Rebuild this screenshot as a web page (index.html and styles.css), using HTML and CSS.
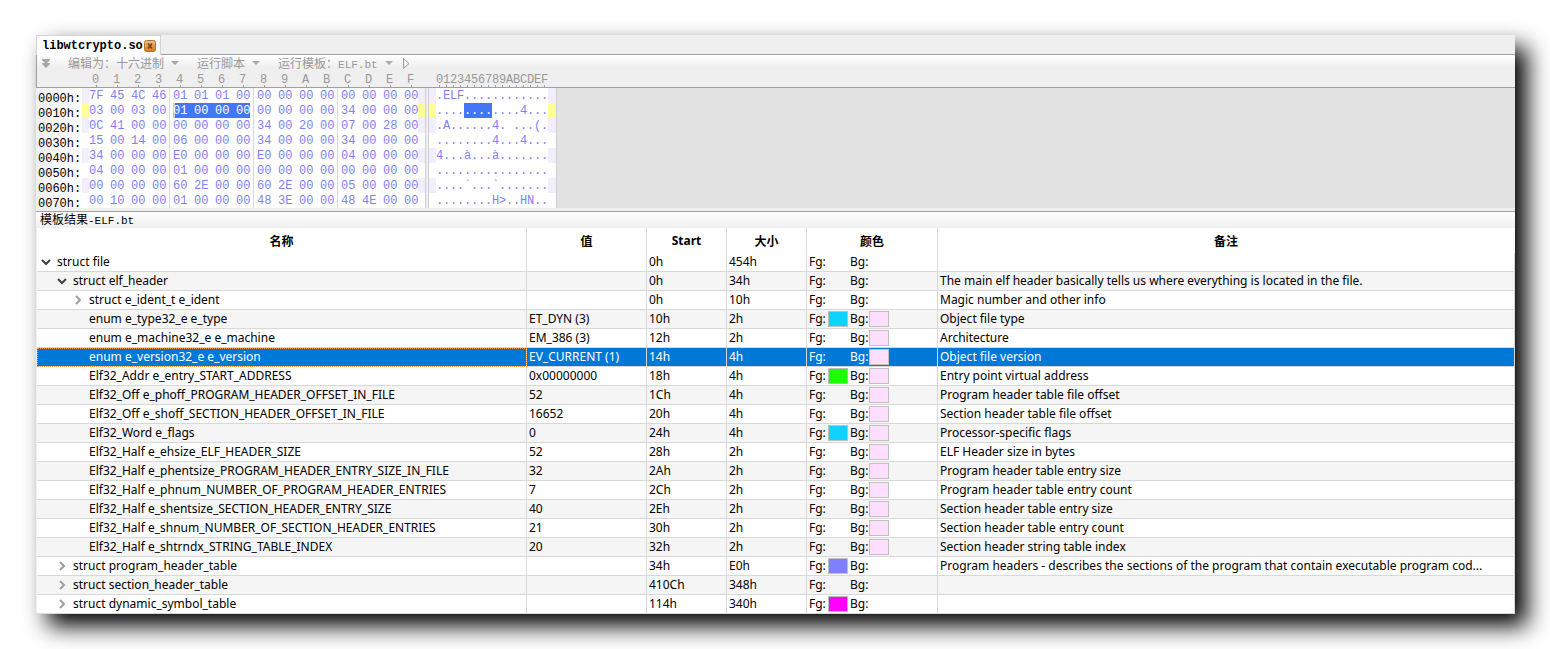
FILE: index.html
```html
<!DOCTYPE html>
<html lang="zh-CN">
  <head>
    <meta charset="UTF-8" />
    <meta name="viewport" content="width=device-width, initial-scale=1.0" />
    <title>libwtcrypto.so</title>
    <link rel="stylesheet" href="styles.css">
  </head>
  <body>
    <main class="window">
      <div class="tabs">
        <div class="tab">
          <span>libwtcrypto.so</span>
          <button class="close" aria-label="Close">
            <svg width="12" height="12" viewBox="0 0 12 12">
              <defs>
                <linearGradient id="orange" x1="0" y1="0" x2="0" y2="1">
                  <stop offset="0" stop-color="#f0bf85" />
                  <stop offset="1" stop-color="#dd7d14" />
                </linearGradient>
              </defs>
              <rect x="0.5" y="0.5" width="11" height="11" rx="2" fill="url(#orange)" stroke="#b8702a" />
              <path d="M4 3.500l4 5M8 3.500l-4 5" stroke="#7a4a1c" stroke-width="2" />
            </svg>
          </button>
        </div>
      </div>

      <div class="toolbar">
        <button class="more" aria-label="More">
          <svg width="8" height="9" viewBox="0 0 8 9" fill="#a8a8a8">
            <path d="M0 0h8v1L5 4h3v1L4 9 0 5V4h3L0 1z" />
          </svg>
        </button>
        <button class="menu"><span>编辑为：十六进制</span><i class="arrow"></i></button>
        <button class="menu"><span>运行脚本</span><i class="arrow"></i></button>
        <button class="menu"><span>运行模板：<span class="latin">ELF.bt</span></span><i class="arrow"></i></button>
        <button class="run" aria-label="Run">
          <svg width="7" height="11" viewBox="0 0 7 11">
            <path d="M0.5 0.5v10l5.5-5z" fill="none" stroke="#999" />
          </svg>
        </button>
      </div>

      <table class="hex">
        <colgroup></colgroup>
        <thead></thead>
        <tbody></tbody>
      </table>

      <h2 class="panel-title">模板结果<span class="latin">-ELF.bt</span></h2>

      <table class="results">
        <colgroup>
          <col class="c-name" />
          <col class="c-value" />
          <col class="c-num" />
          <col class="c-num" />
          <col class="c-color" />
          <col />
        </colgroup>
        <thead>
          <tr>
            <th>名称</th>
            <th>值</th>
            <th>Start</th>
            <th>大小</th>
            <th>颜色</th>
            <th>备注</th>
          </tr>
        </thead>
        <tbody></tbody>
      </table>
    </main>
    <script src="script.js"></script>
  </body>
</html>
```

FILE: styles.css
```css
body {
  margin: 0;
  padding: 35px 35px 35px 36px;
  background: #fff;
  color: #000;
  font-family: "Noto Sans", "Noto Sans CJK SC", sans-serif;
  font-size: 12px;
}
button {
  display: flex;
  align-items: center;
  padding: 0;
  border: 0;
  background: none;
  color: inherit;
  font: inherit;
}
table {
  width: 100%;
  table-layout: fixed;
  border-spacing: 0;
}
th,
td {
  padding: 0;
  text-align: left;
  white-space: nowrap;
}
.window {
  background: #efefef;
  box-shadow: 12px 12px 22px #000;
}

/* tabs */
.tabs {
  display: flex;
  height: 20px;
  box-shadow: inset 0 -1px #a0a0a0;
}
.tab {
  display: flex;
  align-items: center;
  gap: 1px;
  box-sizing: border-box;
  width: 125px;
  padding-left: 5px;
  border: 1px solid #d4d4d4;
  border-bottom: 0;
  background: #fff;
  font: bold 12px "Liberation Mono", monospace;
}

/* toolbar */
.toolbar {
  display: flex;
  align-items: center;
  height: 16px;
  padding-left: 5px;
  border-left: 1px solid #a0a0a0;
  background: linear-gradient(#fff, #efefef 12px);
  color: #999;
  font-family: "Noto Sans CJK SC", sans-serif;
  line-height: 14px;
}
.more,
.menu {
  margin-right: 18px;
}
.arrow {
  margin-left: 7px;
  border: 4px solid transparent;
  border-top-color: #aaa;
  border-bottom: 0;
}
.menu + .run {
  margin-left: -8px;
}
.latin {
  font-family: "Liberation Mono", monospace;
  font-size: 11px;
  line-height: 0;
}

/* hex dump */
.hex {
  font: 12px "Liberation Mono", monospace;
  line-height: 14px;
}
.c-addr {
  width: 46px;
}
.c-side,
.c-char {
  width: 7px;
}
.c-byte {
  width: 21px;
}
.c-last {
  width: 14px;
}
.c-gutter {
  width: 4px;
}
.c-edge {
  width: 8px;
}
.hex thead th {
  height: 14px;
  padding-top: 2px;
  border-bottom: 1px solid #a0a0a0;
  background: #efefef;
  color: #999;
  font-weight: normal;
}
.hex thead th:first-child {
  box-shadow: inset 1px 0 #a0a0a0;
}
.hex thead .tick {
  padding-left: 3px;
  background: linear-gradient(#a0a0a0, #a0a0a0) 7px 100% / 1px 2px no-repeat #efefef;
}
.hex thead .char {
  background: linear-gradient(#a0a0a0, #a0a0a0) 3px 100% / 1px 2px no-repeat #efefef;
}
.hex tbody td {
  height: 14px;
  padding-top: 1px;
  background-color: #fff;
  color: #7f7ff5;
}
.hex tbody th {
  background: linear-gradient(90deg, #efefef, #fff);
  font-weight: normal;
}
/* addresses sit slightly below their bytes */
.addr {
  display: block;
  height: 15px;
  padding-left: 2px;
  line-height: 22px;
}
.hex tbody .group {
  background: linear-gradient(#d8d8d8, #d8d8d8) 17px 0 / 1px 100% no-repeat #fff;
}
.hex tbody .sel {
  background-color: #4477f7;
  color: #fff;
}
.hex tbody .sel.group {
  background:
    linear-gradient(#4477f7, #4477f7) 0 0 / 14px 100% no-repeat,
    linear-gradient(#d8d8d8, #d8d8d8) 17px 0 / 1px 100% no-repeat #fff;
}
.hex tbody .cursor {
  box-shadow: inset 2px 0 #c8c8c8;
}
.hex tbody tr:nth-child(odd) .side {
  background: #f0eeff;
}
.hex tbody .current .side {
  background: #ffff99;
}
.hex tbody .gutter {
  border: solid #d0d0d0;
  border-width: 0 1px;
  background: #efefef;
}
.hex tbody .rest {
  border-left: 1px solid #d0d0d0;
  background: #e2e2e2;
}

/* template results */
.panel-title {
  height: 16px;
  margin: 3px 0 0;
  padding-left: 4px;
  border-top: 1px solid #a0a0a0;
  background: linear-gradient(#fff, #efefef);
  font: 12px "Noto Sans CJK SC", sans-serif;
  line-height: 14px;
}
.results {
  border-left: 1px solid #efefef;
  background: #fff;
}
.c-name {
  width: 490px;
}
.c-value {
  width: 120px;
}
.c-num {
  width: 80px;
}
.c-color {
  width: 131px;
}
.results th {
  height: 25px;
  border-right: 1px solid #d8d8d8;
  text-align: center;
}
.results td {
  height: 18px;
  padding-left: 2px;
  border: solid #d8d8d8;
  border-width: 0 1px 1px 0;
  line-height: 18px;
  overflow: hidden;
}
.results th:last-child {
  border-right-color: #fff;
}
.results tbody tr:nth-child(even) {
  background: #f5f5f5;
}
.results tbody tr.selected {
  background: #0078d7;
  color: #fff;
}
.results .selected td:first-child {
  outline: 1px dotted #f0963c;
  outline-offset: -1px;
}
.name {
  display: flex;
  align-items: center;
  gap: 6px;
  padding-left: 2px;
}
.level-1 {
  padding-left: 18px;
}
.level-2 {
  padding-left: 34px;
}
.toggle {
  justify-content: center;
  width: 10px;
}
.toggle svg {
  fill: none;
  stroke: #a0a0a0;
  stroke-width: 2;
}
.toggle .open {
  stroke: #404040;
}
.colors {
  display: flex;
  align-items: center;
}
.label {
  width: 19px;
}
.swatch {
  box-sizing: border-box;
  width: 20px;
  height: 16px;
  margin-right: 2px;
}
.filled {
  border: 1px solid #c0c0c0;
}
```

FILE: script.js
```js
const dump = [
  ["7F 45 4C 46 01 01 01 00 00 00 00 00 00 00 00 00", ".ELF............"],
  ["03 00 03 00 01 00 00 00 00 00 00 00 34 00 00 00", "............4..."],
  ["0C 41 00 00 00 00 00 00 34 00 20 00 07 00 28 00", ".A......4. ...(."],
  ["15 00 14 00 06 00 00 00 34 00 00 00 34 00 00 00", "........4...4..."],
  ["34 00 00 00 E0 00 00 00 E0 00 00 00 04 00 00 00", "4...à...à......."],
  ["04 00 00 00 01 00 00 00 00 00 00 00 00 00 00 00", "................"],
  ["00 00 00 00 60 2E 00 00 60 2E 00 00 05 00 00 00", "....`...`......."],
  ["00 10 00 00 01 00 00 00 48 3E 00 00 48 4E 00 00", "........H>..HN.."],
];

// level, toggle state, name, value, start, size, fg, bg, comment
const rows = [
  [0, "open", "struct file", "", "0h", "454h", "", "", ""],
  [1, "open", "struct elf_header", "", "0h", "34h", "", "", "The main elf header basically tells us where everything is located in the file."],
  [2, "closed", "struct e_ident_t e_ident", "", "0h", "10h", "", "", "Magic number and other info"],
  [2, "", "enum e_type32_e e_type", "ET_DYN (3)", "10h", "2h", "#0fd2ff", "#ffdfff", "Object file type"],
  [2, "", "enum e_machine32_e e_machine", "EM_386 (3)", "12h", "2h", "", "#ffdfff", "Architecture"],
  [2, "", "enum e_version32_e e_version", "EV_CURRENT (1)", "14h", "4h", "", "#ffdfff", "Object file version"],
  [2, "", "Elf32_Addr e_entry_START_ADDRESS", "0x00000000", "18h", "4h", "#1eff00", "#ffdfff", "Entry point virtual address"],
  [2, "", "Elf32_Off e_phoff_PROGRAM_HEADER_OFFSET_IN_FILE", "52", "1Ch", "4h", "", "#ffdfff", "Program header table file offset"],
  [2, "", "Elf32_Off e_shoff_SECTION_HEADER_OFFSET_IN_FILE", "16652", "20h", "4h", "", "#ffdfff", "Section header table file offset"],
  [2, "", "Elf32_Word e_flags", "0", "24h", "4h", "#0fd2ff", "#ffdfff", "Processor-specific flags"],
  [2, "", "Elf32_Half e_ehsize_ELF_HEADER_SIZE", "52", "28h", "2h", "", "#ffdfff", "ELF Header size in bytes"],
  [2, "", "Elf32_Half e_phentsize_PROGRAM_HEADER_ENTRY_SIZE_IN_FILE", "32", "2Ah", "2h", "", "#ffdfff", "Program header table entry size"],
  [2, "", "Elf32_Half e_phnum_NUMBER_OF_PROGRAM_HEADER_ENTRIES", "7", "2Ch", "2h", "", "#ffdfff", "Program header table entry count"],
  [2, "", "Elf32_Half e_shentsize_SECTION_HEADER_ENTRY_SIZE", "40", "2Eh", "2h", "", "#ffdfff", "Section header table entry size"],
  [2, "", "Elf32_Half e_shnum_NUMBER_OF_SECTION_HEADER_ENTRIES", "21", "30h", "2h", "", "#ffdfff", "Section header table entry count"],
  [2, "", "Elf32_Half e_shtrndx_STRING_TABLE_INDEX", "20", "32h", "2h", "", "#ffdfff", "Section header string table index"],
  [1, "closed", "struct program_header_table", "", "34h", "E0h", "#7f7fff", "", "Program headers - describes the sections of the program that contain executable program cod..."],
  [1, "closed", "struct section_header_table", "", "410Ch", "348h", "", "", ""],
  [1, "closed", "struct dynamic_symbol_table", "", "114h", "340h", "#ff00ff", "", ""],
];

const digits = [..."0123456789ABCDEF"];
const selected = (row, i) => row === 1 && i >= 4 && i <= 7;

// hex dump
const hex = document.querySelector(".hex");
const col = (name) => `<col class="c-${name}">`;
hex.querySelector("colgroup").innerHTML =
  col("addr") + col("side") + col("byte").repeat(15) + col("last") + col("side") +
  col("gutter") + col("side") + col("char").repeat(16) + col("edge") + "<col>";

hex.querySelector("thead").innerHTML = `
  <tr>
    <th></th><th></th>
    ${digits.map((d) => `<th class="tick">${d}</th>`).join("")}
    <th></th><th></th><th></th>
    ${digits.map((d) => `<th class="char">${d}</th>`).join("")}
    <th></th><th></th>
  </tr>`;

hex.querySelector("tbody").innerHTML = dump
  .map(([bytes, chars], r) => {
    const byteCells = bytes.split(" ").map((b, i) => {
      const cls = [];
      if (i % 4 === 3 && i < 15) cls.push("group");
      if (selected(r, i)) cls.push("sel");
      if (r === 1 && i === 4) cls.push("cursor");
      return `<td class="${cls.join(" ")}">${b}</td>`;
    });
    const charCells = [...chars].map((c, i) => `<td class="${selected(r, i) ? "sel" : ""}">${c}</td>`);
    return `
      <tr class="${r === 1 ? "current" : ""}">
        <th><span class="addr">00${r}0h:</span></th>
        <td class="side"></td>${byteCells.join("")}<td class="side"></td>
        <td class="gutter"></td>
        <td class="side"></td>${charCells.join("")}<td class="side"></td>
        <td class="rest"></td>
      </tr>`;
  })
  .join("");

// template results
const icons = {
  open: `<svg class="open" width="10" height="8" viewBox="0 0 10 8"><path d="M1 2l4 4 4-4" /></svg>`,
  closed: `<svg width="8" height="10" viewBox="0 0 8 10"><path d="M2 1l4 4-4 4" /></svg>`,
};
const toggle = (state) => (state ? `<button class="toggle" aria-label="${state}">${icons[state]}</button>` : `<span class="toggle"></span>`);
const swatch = (color) => (color ? `<span class="swatch filled" style="background: ${color}"></span>` : `<span class="swatch"></span>`);

document.querySelector(".results tbody").innerHTML = rows
  .map(
    ([level, state, name, value, start, size, fg, bg, comment], i) => `
    <tr class="${i === 5 ? "selected" : ""}">
      <td><div class="name level-${level}">${toggle(state)}<span>${name}</span></div></td>
      <td>${value}</td>
      <td>${start}</td>
      <td>${size}</td>
      <td><div class="colors"><span class="label">Fg:</span>${swatch(fg)}<span class="label">Bg:</span>${swatch(bg)}</div></td>
      <td>${comment}</td>
    </tr>`
  )
  .join("");
```
